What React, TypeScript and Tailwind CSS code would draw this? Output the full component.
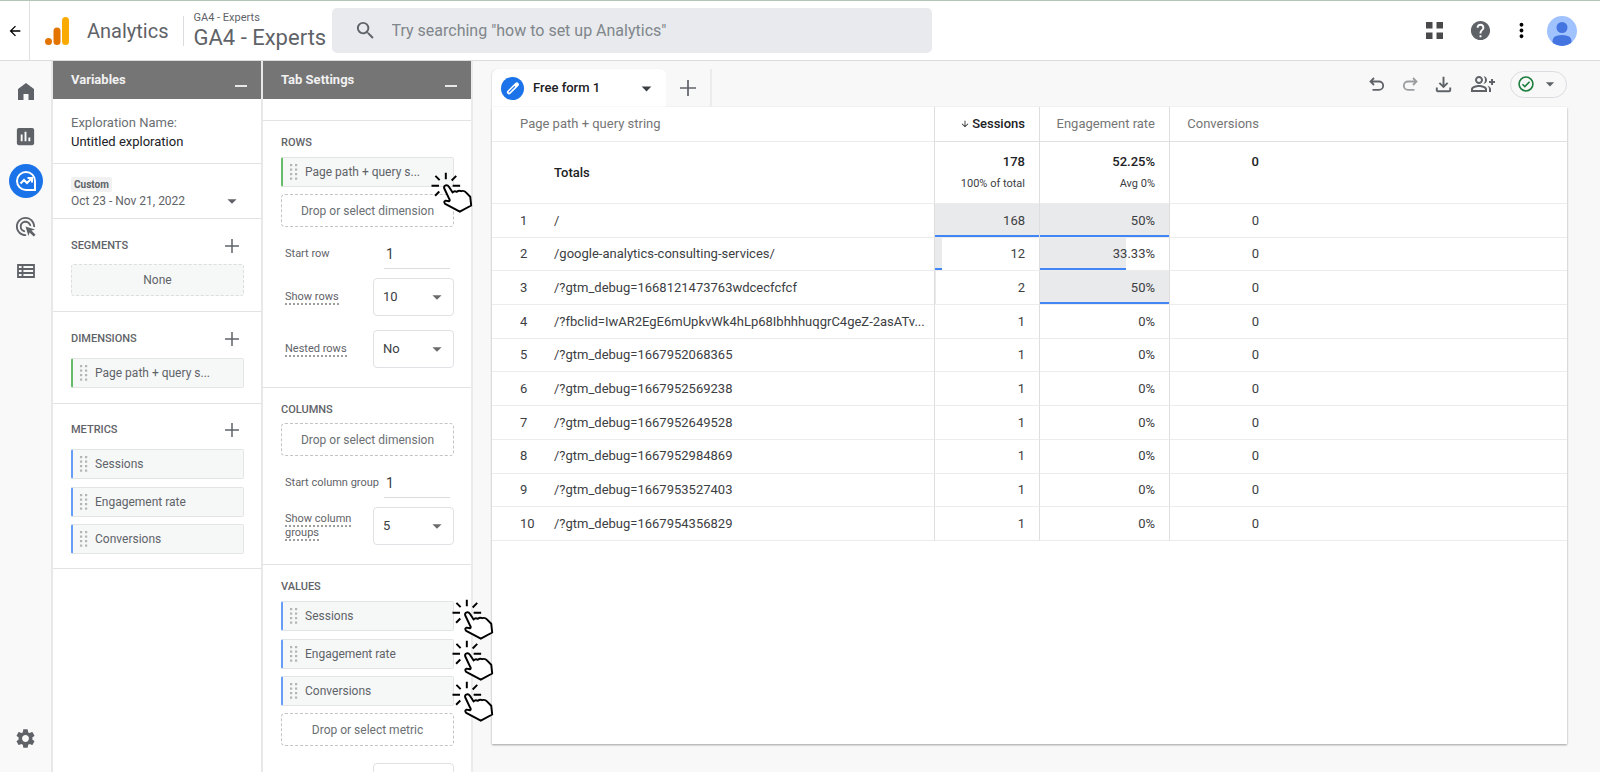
import type { ReactNode } from "react";
import {
  MdAdsClick,
  MdArrowBack,
  MdArrowDownward,
  MdArrowDropDown,
  MdHelp,
  MdInsertChart,
  MdMoreVert,
  MdOutlineFileDownload,
  MdOutlineGroupAdd,
  MdSearch,
  MdSettings,
} from "react-icons/md";

const rows = [
  { path: "/", sessions: "168", rate: "50%", sessionsBar: 100, rateBar: 100 },
  { path: "/google-analytics-consulting-services/", sessions: "12", rate: "33.33%", sessionsBar: 7, rateBar: 67 },
  { path: "/?gtm_debug=1668121473763wdcecfcfcf", sessions: "2", rate: "50%", sessionsBar: 1, rateBar: 100 },
  { path: "/?fbclid=IwAR2EgE6mUpkvWk4hLp68IbhhhuqgrC4geZ-2asATv...", sessions: "1", rate: "0%", sessionsBar: 0, rateBar: 0 },
  { path: "/?gtm_debug=1667952068365", sessions: "1", rate: "0%", sessionsBar: 0, rateBar: 0 },
  { path: "/?gtm_debug=1667952569238", sessions: "1", rate: "0%", sessionsBar: 0, rateBar: 0 },
  { path: "/?gtm_debug=1667952649528", sessions: "1", rate: "0%", sessionsBar: 0, rateBar: 0 },
  { path: "/?gtm_debug=1667952984869", sessions: "1", rate: "0%", sessionsBar: 0, rateBar: 0 },
  { path: "/?gtm_debug=1667953527403", sessions: "1", rate: "0%", sessionsBar: 0, rateBar: 0 },
  { path: "/?gtm_debug=1667954356829", sessions: "1", rate: "0%", sessionsBar: 0, rateBar: 0 },
];

function PlusIcon({ className }: { className: string }) {
  return (
    <svg viewBox="0 0 14 14" className={className} fill="none" stroke="currentColor" strokeWidth="1.5">
      <path d="M7 0v14M0 7h14" />
    </svg>
  );
}

function PanelHeader({ title }: { title: string }) {
  return (
    <div className="flex h-[38px] shrink-0 items-center justify-between bg-[#757575] pr-3.5 pl-[18px]">
      <h2 className="text-[13px] leading-5 font-bold text-[#f1f1f1]">{title}</h2>
      <button aria-label={`Minimize ${title}`} className="flex h-5 w-3 items-end pb-[3px]">
        <span className="h-0.5 w-3 bg-[#e8e8e8]" />
      </button>
    </div>
  );
}

function Chip({ label, tone }: { label: string; tone: "green" | "blue" }) {
  const edge = tone === "green" ? "border-l-[#66bb6a]" : "border-l-[#669df6]";
  return (
    <button
      className={`flex h-[30px] w-full items-center rounded-[2px] border border-l-2 border-[#e3e5e5] bg-[#f6f8f8] pl-[7px] text-left text-[12px] text-[#5f6368] ${edge}`}
    >
      <svg viewBox="0 0 8 16" className="mr-[7px] h-4 w-2 shrink-0" fill="#b4b4b4">
        {[0, 4.5, 9, 13.5].map((y) => (
          <g key={y}>
            <rect x="0" y={y} width="2.2" height="2.2" />
            <rect x="5" y={y} width="2.2" height="2.2" />
          </g>
        ))}
      </svg>
      {label}
    </button>
  );
}

function DropZone({ label }: { label: string }) {
  return (
    <button className="h-[33px] w-full rounded-[4px] border border-dashed border-[#c4c4c4] text-[12px] text-[#6b6f73]">
      {label}
    </button>
  );
}

function SectionHead({ title }: { title: string }) {
  return (
    <div className="flex items-center justify-between pr-[5px]">
      <h3 className="text-[11px] leading-5 font-medium text-[#5f6368]">{title}</h3>
      <button aria-label={`Add ${title.toLowerCase()}`} className="text-[#5f6368]">
        <PlusIcon className="size-3.5" />
      </button>
    </div>
  );
}

function NumberField({ id, label }: { id: string; label: string }) {
  return (
    <div className="flex h-[30px] items-center pl-1 text-[11px] text-[#5f6368]">
      <label htmlFor={id} className="w-[99px] whitespace-nowrap">
        {label}
      </label>
      <input
        id={id}
        defaultValue="1"
        className="h-[30px] w-[66px] border-b border-[#dcdcdc] bg-transparent pl-0.5 text-[14px] text-[#3c4043] outline-none"
      />
    </div>
  );
}

function SelectField({ id, label, options }: { id: string; label: string; options: string[] }) {
  return (
    <div className="flex h-[38px] items-center justify-between pl-1">
      <label htmlFor={id} className="w-20 text-[11px] leading-[14px] text-[#5f6368]">
        <span className="border-b-2 border-dotted border-[#9e9e9e]">{label}</span>
      </label>
      <span className="relative">
        <select
          id={id}
          className="h-[38px] w-[81px] appearance-none rounded-[4px] border border-[#dfe1e5] bg-white pb-px pl-[9px] text-[13px] text-[#3c4043] outline-none"
        >
          {options.map((o) => (
            <option key={o}>{o}</option>
          ))}
        </select>
        <MdArrowDropDown className="pointer-events-none absolute top-2 right-1.5 size-[22px] text-[#6b6b6b]" />
      </span>
    </div>
  );
}

function TapHand() {
  return (
    <svg viewBox="0 0 128 126" className="h-[41px] w-[42px]" fill="none" stroke="#000" strokeWidth="6">
      <path d="M45 2v20M13 12l13 13M77 12L63 26M1 42h23M66 42h23M12 73l13-13" />
      <path
        d="M55 82L40 50Q38 43 45 41Q51 40 55 46L66 63Q71 57 79 61Q85 56 92 59Q101 56 106 62L120 76L123 103L88 122L43 98Q37 91 44 88L55 90Q59 87 55 82Z"
        fill="white"
        strokeLinejoin="round"
      />
    </svg>
  );
}

function NavButton({ label, children, active }: { label: string; children: ReactNode; active?: boolean }) {
  return (
    <button
      aria-label={label}
      className={`flex size-[34px] items-center justify-center rounded-full ${active ? "bg-[#1a73e8] text-white" : "text-[#5f6368]"}`}
    >
      {children}
    </button>
  );
}

function BarCell({ value, bar }: { value: string; bar: number }) {
  return (
    <td className="relative border-r border-b border-r-[#dedede] border-b-[#ececec] p-0 pr-3.5 text-right">
      <span
        className={`absolute inset-y-0 left-0 bg-[#e9eaeb] ${bar > 1 ? "border-b-2 border-[#4285f4]" : ""}`}
        style={{ width: `${bar}%` }}
      />
      <span className="relative">{value}</span>
    </td>
  );
}

export default function App() {
  return (
    <div className="flex h-screen flex-col overflow-hidden bg-white font-['Roboto',sans-serif] text-[#3c4043]">
      <header className="flex h-[61px] shrink-0 items-center border-t border-b border-t-[#b3c6b5] border-b-[#dadce0]">
        <button aria-label="Back" className="flex h-full w-[30px] items-center justify-center border-r border-[#e0e0e0] text-black">
          <MdArrowBack className="size-4" />
        </button>
        <a href="#home" className="flex items-center pl-[15px]">
          <svg viewBox="0 0 24 28" className="h-7 w-6" aria-hidden="true">
            <rect x="17" y="0" width="7" height="28" rx="3.5" fill="#f9ab00" />
            <rect x="8.5" y="10.5" width="7" height="17.5" rx="3.5" fill="#e37400" />
            <circle cx="3.5" cy="24.5" r="3.5" fill="#e37400" />
          </svg>
          <span className="ml-[18px] text-[20px] leading-7 text-[#5f6368]">Analytics</span>
        </a>
        <button className="ml-3.5 h-[30px] w-[139px] border-l border-[#dadce0] pl-2.5 text-left text-[#5f6368]">
          <span className="-mt-1.5 block text-[11px] leading-4 whitespace-nowrap">GA4 - Experts</span>
          <span className="block text-[22px] leading-6 whitespace-nowrap">GA4 - Experts</span>
        </button>
        <label className="ml-2.5 flex h-[45px] w-[600px] items-center rounded-[5px] bg-[#e8eaed] pl-[22px] text-[#5f6368]">
          <MdSearch className="size-[23px]" aria-hidden="true" />
          <input
            aria-label="Search"
            placeholder={'Try searching "how to set up Analytics"'}
            className="ml-[15px] flex-1 bg-transparent text-[16px] outline-none placeholder:text-[#80868b]"
          />
        </label>
        <div className="ml-auto flex items-center pr-[23px]">
          <button aria-label="Apps" className="mr-[26px] text-[#4a4a4d]">
            <svg viewBox="0 0 17 17" className="size-[17px]" fill="currentColor">
              <path d="M0 0h6.5v6.5H0zM10.5 0h6.5v6.5h-6.500zM0 10.500h6.500v6.500H0zM10.500 10.500h6.500v6.500h-6.500z" />
            </svg>
          </button>
          <button aria-label="Help" className="mr-[18px] text-[#5f6368]">
            <MdHelp className="size-[23px]" />
          </button>
          <button aria-label="More" className="mr-3.5 text-black">
            <MdMoreVert className="size-[23px]" />
          </button>
          <button aria-label="Account">
            <svg viewBox="0 0 30 30" className="size-[30px]">
              <clipPath id="avatar">
                <circle cx="15" cy="15" r="15" />
              </clipPath>
              <g clipPath="url(#avatar)">
                <rect width="30" height="30" fill="#a0c3ff" />
                <circle cx="15" cy="11.5" r="5.5" fill="#4374e0" />
                <path d="M5.500 30v-5q0-6 9.500-6t9.500 6v5z" fill="#4374e0" />
              </g>
            </svg>
          </button>
        </div>
      </header>

      <div className="flex min-h-0 flex-1">
        <nav className="flex w-[53px] shrink-0 flex-col items-center gap-[11px] border-r-2 border-[#e8e8e8] bg-[#f9f9f9] pt-[13px] pb-[17px]">
          <NavButton label="Home">
            <svg viewBox="0 0 16 17" className="h-[17px] w-4" fill="currentColor">
              <path d="M0 17V6l8-6 8 6v11h-5.500v-6h-5v6z" />
            </svg>
          </NavButton>
          <NavButton label="Reports">
            <MdInsertChart className="size-[23px]" />
          </NavButton>
          <NavButton label="Explore" active>
            <svg viewBox="0 0 20 20" className="size-5" fill="none" stroke="currentColor" strokeWidth="2">
              <path d="M10 1a9 9 0 1 0 0 18h9v-9a9 9 0 0 0-9-9z" />
              <path d="M4.500 12.500l3.500-3.500 3 3 4.500-4.500M11.500 7h4.500v4.500" />
            </svg>
          </NavButton>
          <NavButton label="Advertising">
            <MdAdsClick className="size-[23px]" />
          </NavButton>
          <NavButton label="Configure">
            <svg viewBox="0 0 18 14" className="h-3.5 w-[18px]" fill="none" stroke="currentColor" strokeWidth="1.8">
              <path d="M1 1h16v12H1zM5.500 1v12M1 5h16M1 9h16" />
            </svg>
          </NavButton>
          <div className="mt-auto">
            <NavButton label="Admin">
              <MdSettings className="size-[23px]" />
            </NavButton>
          </div>
        </nav>

        <aside className="flex w-[210px] shrink-0 flex-col border-r-2 border-[#e8e8e8]">
          <PanelHeader title="Variables" />
          <div className="h-[65px] border-b border-[#e3e3e3] px-[18px] pt-3.5 text-[13px] leading-[19px]">
            <p className="text-[#6b6f73]">Exploration Name:</p>
            <p className="text-[#202124]">Untitled exploration</p>
          </div>
          <div className="h-[55px] border-b border-[#e3e3e3] px-[18px] pt-[13px]">
            <span className="block w-fit rounded-[2px] bg-[#f1f1f1] px-[3px] text-[10px] leading-[15px] font-bold text-[#5f6368]">Custom</span>
            <button className="flex h-[18px] w-full items-center justify-between text-[12px] leading-[18px] text-[#5f6368]">
              Oct 23 - Nov 21, 2022
              <MdArrowDropDown className="size-[22px]" />
            </button>
          </div>
          <section className="h-[93px] border-b border-[#e3e3e3] pt-[17px] pr-[17px] pl-[18px]">
            <SectionHead title="SEGMENTS" />
            <button className="mt-2 h-8 w-full rounded-[3px] border border-dashed border-[#dcdede] bg-[#f6f8f8] text-[12px] text-[#5f6368]">
              None
            </button>
          </section>
          <section className="h-[92px] border-b border-[#e3e3e3] pt-[17px] pr-[17px] pl-[18px]">
            <SectionHead title="DIMENSIONS" />
            <div className="mt-[9px]">
              <Chip label="Page path + query s..." tone="green" />
            </div>
          </section>
          <section className="h-[165px] border-b border-[#e3e3e3] pt-4 pr-[17px] pl-[18px]">
            <SectionHead title="METRICS" />
            <div className="mt-[9px] flex h-[105px] flex-col justify-between">
              <Chip label="Sessions" tone="blue" />
              <Chip label="Engagement rate" tone="blue" />
              <Chip label="Conversions" tone="blue" />
            </div>
          </section>
        </aside>

        <aside className="flex w-[210px] shrink-0 flex-col border-r-2 border-[#ebebeb]">
          <PanelHeader title="Tab Settings" />
          <div className="h-[22px] shrink-0 border-b border-[#e3e3e3]" />
          <section className="h-[267px] shrink-0 border-b border-[#e3e3e3] pt-3 pr-[17px] pl-[18px]">
            <h3 className="text-[11px] leading-5 font-medium text-[#5f6368]">ROWS</h3>
            <div className="relative mt-1 mb-[7px]">
              <Chip label="Page path + query s..." tone="green" />
              <div className="absolute top-[15px] -right-[19px] z-10">
                <TapHand />
              </div>
            </div>
            <DropZone label="Drop or select dimension" />
            <div className="mt-3 flex flex-col">
              <NumberField id="start-row" label="Start row" />
              <div className="mt-[9px] flex flex-col gap-3.5">
                <SelectField id="show-rows" label="Show rows" options={["10", "25", "50"]} />
                <SelectField id="nested-rows" label="Nested rows" options={["No", "Yes"]} />
              </div>
            </div>
          </section>
          <section className="h-[177px] shrink-0 border-b border-[#e3e3e3] pt-3 pr-[17px] pl-[18px]">
            <h3 className="mb-[3px] text-[11px] leading-5 font-medium text-[#5f6368]">COLUMNS</h3>
            <DropZone label="Drop or select dimension" />
            <div className="mt-3 flex flex-col gap-[9px]">
              <NumberField id="start-column" label="Start column group" />
              <SelectField id="show-columns" label="Show column groups" options={["5", "10", "20"]} />
            </div>
          </section>
          <section className="shrink-0 pt-3 pr-[17px] pl-[18px]">
            <h3 className="text-[11px] leading-5 font-medium text-[#5f6368]">VALUES</h3>
            <div className="relative mt-1 mb-[7px] flex h-[105px] flex-col justify-between">
              <Chip label="Sessions" tone="blue" />
              <Chip label="Engagement rate" tone="blue" />
              <Chip label="Conversions" tone="blue" />
              <div className="absolute -top-0.5 -right-10 z-10 flex flex-col">
                <TapHand />
                <TapHand />
                <TapHand />
              </div>
            </div>
            <DropZone label="Drop or select metric" />
            <div className="mt-[17px]">
              <SelectField id="cell-type" label="" options={["Bar chart", "Heat map"]} />
            </div>
          </section>
        </aside>

        <main className="flex min-w-0 flex-1 flex-col bg-[#f8f8f8] pt-2 pr-[33px] pb-7 pl-[19px]">
          <div className="flex h-[38px] shrink-0 items-stretch">
            <button className="flex w-[174px] items-center rounded-t-[6px] bg-white pr-2 pl-[9px] text-[13px] font-medium text-[#202124] shadow-[-1px_0_1px_#e4e4e4]">
              <span className="mr-[9px] flex size-[23px] items-center justify-center rounded-full bg-[#1a73e8]">
                <svg viewBox="0 0 14 14" className="size-3.5" fill="none" strokeLinecap="round">
                  <path d="M3 11.200L10.800 3.400" stroke="white" strokeWidth="4.2" />
                  <path d="M3.300 10.900L8.600 5.600" stroke="#1a73e8" strokeWidth="1.2" />
                </svg>
              </span>
              Free form 1
              <MdArrowDropDown className="ml-auto size-[23px] text-[#3c4043]" />
            </button>
            <button aria-label="Add tab" className="flex w-[46px] items-center justify-center rounded-b-[3px] border-r-2 border-[#ebebeb] text-[#5f6368]">
              <PlusIcon className="size-4" />
            </button>
            <div className="-mt-2 ml-auto flex items-center text-[#5f6368]">
              <button aria-label="Undo" className="mr-[19px]">
                <svg viewBox="0 0 15 14" className="h-3.5 w-[15px]" fill="none" stroke="currentColor" strokeWidth="1.8">
                  <path d="M5 1L1.500 4.500 5 8M1.500 4.500H10a4 4 0 0 1 0 8.300H3.500" />
                </svg>
              </button>
              <button aria-label="Redo" className="mr-3.5 text-[#9b9ea1]">
                <svg viewBox="0 0 15 14" className="h-3.5 w-[15px]" fill="none" stroke="currentColor" strokeWidth="1.8">
                  <path d="M10 1l3.500 3.500L10 8M13.500 4.500H5a4 4 0 0 0 0 8.300h6.500" />
                </svg>
              </button>
              <button aria-label="Download" className="mr-4">
                <MdOutlineFileDownload className="size-[23px]" />
              </button>
              <button aria-label="Share" className="mr-[15px]">
                <MdOutlineGroupAdd className="size-6" />
              </button>
              <button aria-label="Data quality" className="flex h-[27px] w-[57px] items-center rounded-full border border-[#dadce0] pl-[7px]">
                <svg viewBox="0 0 18 18" className="size-4" fill="none" stroke="#1e7e3e" strokeWidth="1.8">
                  <circle cx="9" cy="9" r="7.8" />
                  <path d="M5 9.300l2.700 2.700L13 6.500" />
                </svg>
                <MdArrowDropDown className="ml-1.5 size-5" />
              </button>
            </div>
          </div>

          <div className="min-h-0 flex-1 bg-white shadow-[0_1px_2px_#9e9e9e]">
            <table className="h-[434px] w-full table-fixed border-separate border-spacing-0 text-[13px]">
              <colgroup>
                <col className="w-[62px]" />
                <col className="w-[381px]" />
                <col className="w-[105px]" />
                <col className="w-[130px]" />
                <col className="w-[89px]" />
                <col />
              </colgroup>
              <thead>
                <tr className="h-[35px] text-[#757575]">
                  <th colSpan={2} className="border-r border-b border-r-[#dedede] border-b-[#ececec] p-0 pl-7 text-left font-normal">
                    Page path + query string
                  </th>
                  <th className="border-r border-b border-r-[#dedede] border-b-[#e0e0e0] p-0 pr-3.5 font-medium text-[#202124]">
                    <button className="ml-auto flex items-center">
                      <MdArrowDownward className="mr-0.5 size-2.5" />
                      Sessions
                    </button>
                  </th>
                  <th className="border-r border-b border-r-[#dedede] border-b-[#e0e0e0] p-0 pr-3.5 text-right font-normal">Engagement rate</th>
                  <th className="border-b border-[#e0e0e0] p-0 text-right font-normal">Conversions</th>
                  <td className="border-b border-[#e0e0e0]" />
                </tr>
              </thead>
              <tbody>
                <tr className="h-[62px] font-medium text-[#202124]">
                  <td className="border-b border-[#ececec]" />
                  <td className="border-r border-b border-r-[#dedede] border-b-[#ececec] p-0">Totals</td>
                  <td className="border-r border-b border-r-[#dedede] border-b-[#ececec] p-0 pr-3.5 text-right leading-[22px]">
                    178
                    <span className="block text-[11px] font-normal text-[#3c4043]">100% of total</span>
                  </td>
                  <td className="border-r border-b border-r-[#dedede] border-b-[#ececec] p-0 pr-3.5 text-right leading-[22px]">
                    52.25%
                    <span className="block text-[11px] font-normal text-[#3c4043]">Avg 0%</span>
                  </td>
                  <td className="border-b border-[#ececec] p-0 pt-[9px] text-right align-top leading-[22px]">0</td>
                  <td className="border-b border-[#ececec]" />
                </tr>
                {rows.map((r, i) => (
                  <tr key={r.path}>
                    <td className="border-b border-[#ececec] p-0 pl-7">{i + 1}</td>
                    <td className="border-r border-b border-r-[#dedede] border-b-[#ececec] p-0 whitespace-nowrap">{r.path}</td>
                    <BarCell value={r.sessions} bar={r.sessionsBar} />
                    <BarCell value={r.rate} bar={r.rateBar} />
                    <td className="border-b border-[#ececec] p-0 text-right">0</td>
                    <td className="border-b border-[#ececec]" />
                  </tr>
                ))}
              </tbody>
            </table>
          </div>
        </main>
      </div>
    </div>
  );
}
